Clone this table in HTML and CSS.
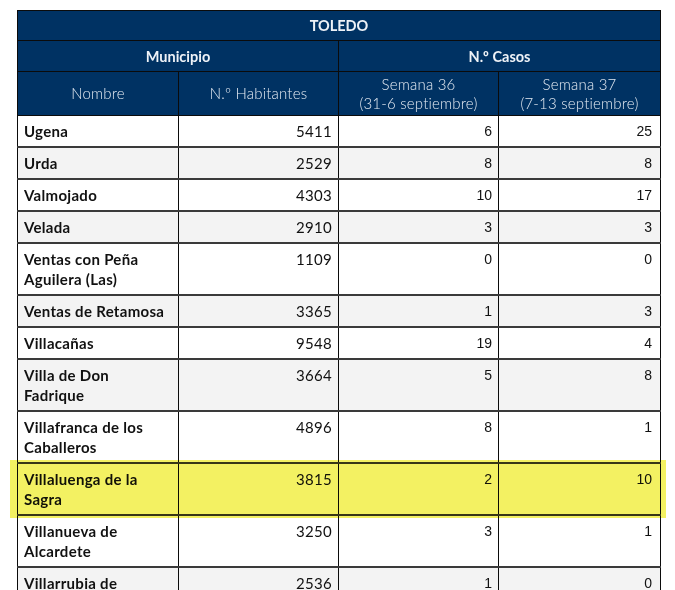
FILE: index.html
```html
<!DOCTYPE html>
<html lang="es">
<head>
<meta charset="utf-8">
<title>Toledo</title>
<link rel="stylesheet" href="styles.css">
</head>
<body>
<table class="t">
  <colgroup>
    <col class="c1"><col class="c2"><col class="c3"><col class="c4">
  </colgroup>
  <thead>
    <tr class="h1"><th colspan="4">TOLEDO</th></tr>
    <tr class="h2"><th colspan="2">Municipio</th><th colspan="2">N.º Casos</th></tr>
    <tr class="h3"><th class="lt">Nombre</th><th class="lt">N.º Habitantes</th><th class="lt">Semana 36<br>(31-6 septiembre)</th><th class="lt">Semana 37<br>(7-13 septiembre)</th></tr>
  </thead>
  <tbody>
    <tr><td class="n">Ugena</td><td class="h">5411</td><td class="k">6</td><td class="k">25</td></tr>
    <tr class="z"><td class="n">Urda</td><td class="h">2529</td><td class="k">8</td><td class="k">8</td></tr>
    <tr><td class="n">Valmojado</td><td class="h">4303</td><td class="k">10</td><td class="k">17</td></tr>
    <tr class="z"><td class="n">Velada</td><td class="h">2910</td><td class="k">3</td><td class="k">3</td></tr>
    <tr><td class="n">Ventas con Peña Aguilera (Las)</td><td class="h">1109</td><td class="k">0</td><td class="k">0</td></tr>
    <tr class="z"><td class="n">Ventas de Retamosa</td><td class="h">3365</td><td class="k">1</td><td class="k">3</td></tr>
    <tr><td class="n">Villacañas</td><td class="h">9548</td><td class="k">19</td><td class="k">4</td></tr>
    <tr class="z"><td class="n">Villa de Don Fadrique</td><td class="h">3664</td><td class="k">5</td><td class="k">8</td></tr>
    <tr><td class="n">Villafranca de los Caballeros</td><td class="h">4896</td><td class="k">8</td><td class="k">1</td></tr>
    <tr class="hl"><td class="n mark-cell"><span class="mark"></span>Villaluenga de la Sagra</td><td class="h">3815</td><td class="k">2</td><td class="k">10</td></tr>
    <tr><td class="n">Villanueva de Alcardete</td><td class="h">3250</td><td class="k">3</td><td class="k">1</td></tr>
    <tr class="z"><td class="n">Villarrubia de <span class="nw">los Ojos</span></td><td class="h">2536</td><td class="k">1</td><td class="k">0</td></tr>
  </tbody>
</table>
</body>
</html>
```

FILE: styles.css
```css
html, body {
  margin: 0;
  padding: 0;
  background: #ffffff;
}
body {
  padding: 10px 0 0 17px;
  overflow: hidden;
  height: 590px;
  box-sizing: border-box;
}
.t {
  border-collapse: collapse;
  table-layout: fixed;
  width: 643px;
  font-family: Lato, "Noto Sans", sans-serif;
}
.c1 { width: 161px; }
.c2 { width: 160px; }
.c3 { width: 160px; }
.c4 { width: 162px; }

.t th {
  background: #003263;
  color: #eef2f7;
  border: 1px solid #0b0b0b;
  padding: 0;
  font-weight: 700;
  font-size: 14.5px;
  line-height: 19px;
  text-align: center;
  vertical-align: middle;
}
.h1 th { height: 29px; }
.h2 th { height: 30px; }
.h3 th { height: 43px; }
.t th.lt {
  font-weight: 300;
  font-size: 15px;
  letter-spacing: 0.2px;
  color: #e4ebf3;
}

.t td {
  border-left: 1px solid #0b0b0b;
  border-right: 1px solid #0b0b0b;
  border-top: 2px solid #3a3a3a;
  border-bottom: 2px solid #3a3a3a;
  padding: 5px 6px 5px 6px;
  line-height: 20px;
  vertical-align: top;
  color: #111;
}
.t tbody tr:first-child td { border-top: 1px solid #0b0b0b; }
.z td { background: #f3f3f3; }

.n {
  font-weight: 700;
  font-size: 15px;
  letter-spacing: 0.3px;
}
.nw { white-space: nowrap; }
.h {
  text-align: right;
  font-size: 15px;
  font-weight: 400;
  letter-spacing: 0.3px;
  color: #222;
}
.k {
  text-align: right;
  font-family: "Liberation Sans", Arial, sans-serif;
  font-size: 14px;
  padding-right: 7px;
}
.t td.k:last-child { padding-right: 8px; }

.mark-cell { position: relative; }
.mark {
  position: absolute;
  left: -8px;
  top: -4px;
  width: 656px;
  height: 58px;
  background: #f3f162;
  mix-blend-mode: multiply;
  pointer-events: none;
}
```
